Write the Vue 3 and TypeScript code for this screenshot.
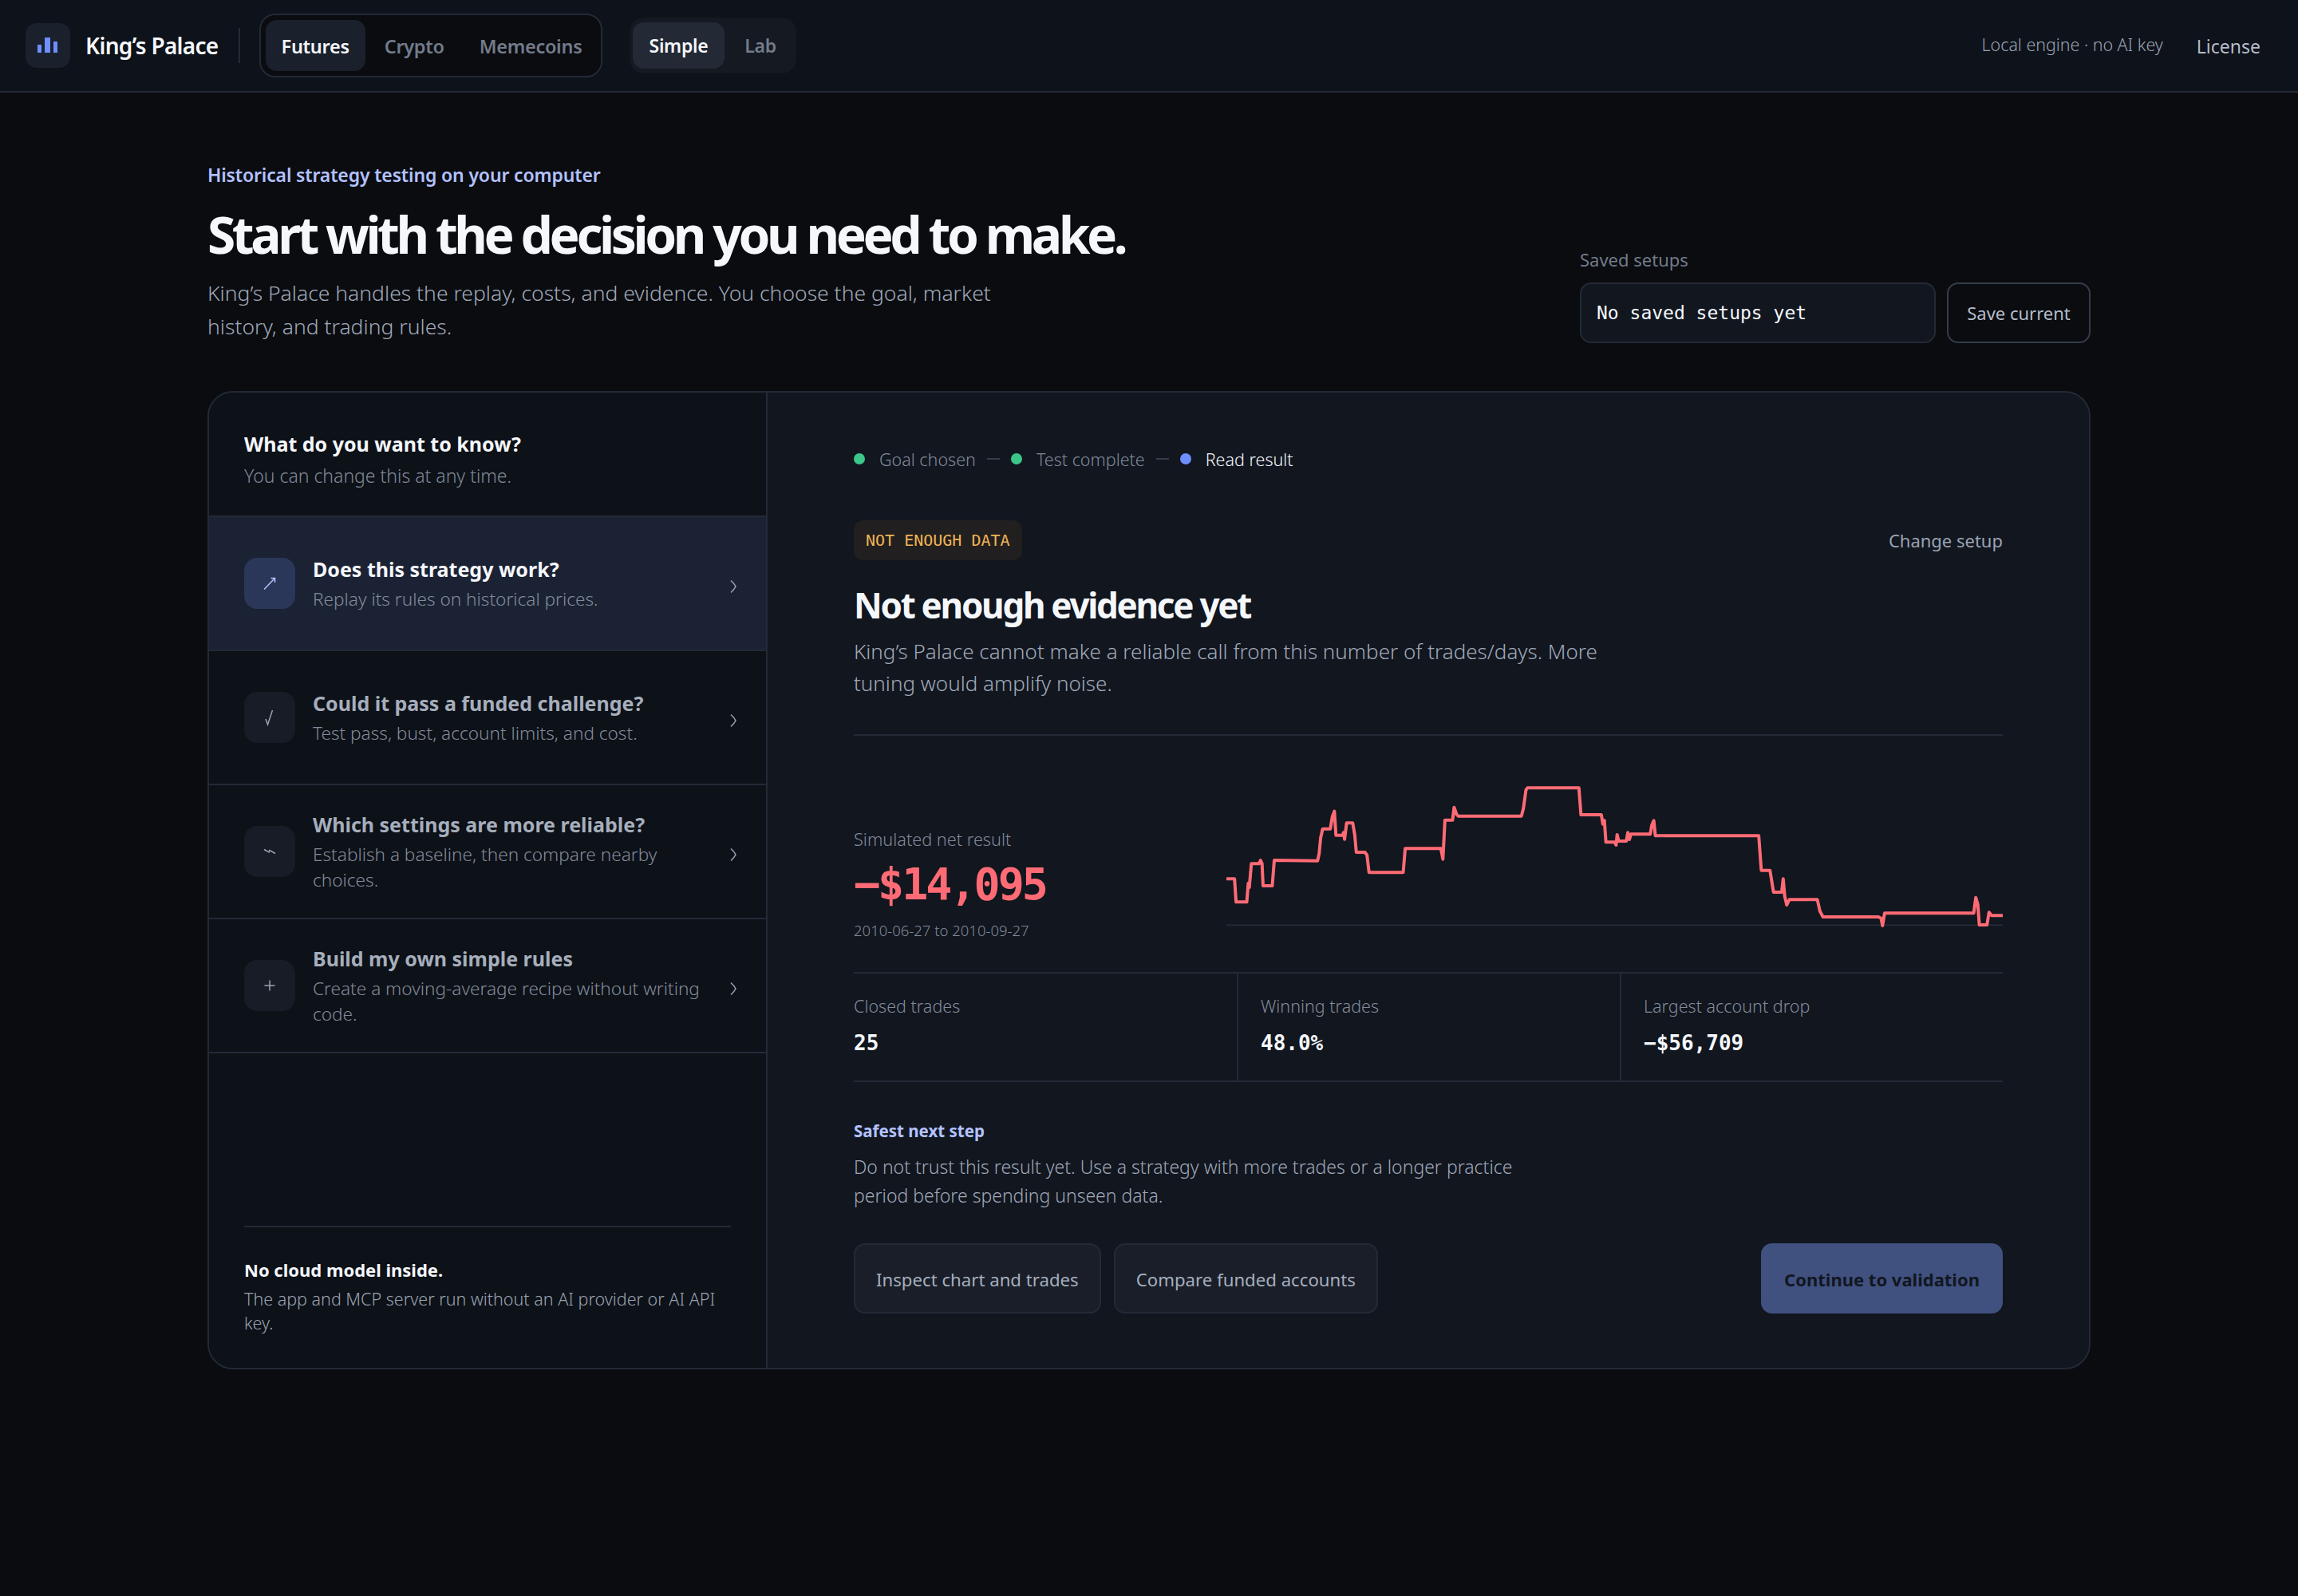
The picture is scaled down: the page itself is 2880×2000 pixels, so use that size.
<template>
  <div class="page">
    <header class="topbar">
      <div class="logo">
        <svg width="26" height="20" viewBox="0 0 26 20">
          <rect x="0" y="9" width="5" height="10" fill="#6f8eff" />
          <rect x="9" y="0" width="7" height="19" fill="#6f8eff" />
          <rect x="20" y="5" width="5" height="14" fill="#6f8eff" />
        </svg>
      </div>
      <span class="brand">King’s Palace</span>
      <span class="top-divider"></span>
      <nav class="market-tabs">
        <button v-for="m in markets" :key="m" class="market-tab" :class="{ active: m === 'Futures' }">{{ m }}</button>
      </nav>
      <nav class="mode-tabs">
        <button class="mode-tab active">Simple</button>
        <button class="mode-tab">Lab</button>
      </nav>
      <span class="engine">Local engine · no AI key</span>
      <span class="license">License</span>
    </header>

    <main class="content">
      <section class="hero">
        <div class="hero-text">
          <div class="eyebrow">Historical strategy testing on your computer</div>
          <h1>Start with the decision you need to make.</h1>
          <p class="lead">King’s Palace handles the replay, costs, and evidence. You choose the goal, market history, and trading rules.</p>
        </div>
        <div class="saved">
          <label class="saved-label">Saved setups</label>
          <div class="saved-row">
            <div class="saved-select">No saved setups yet</div>
            <button class="saved-btn">Save current</button>
          </div>
        </div>
      </section>

      <section class="panel">
        <aside class="goals">
          <div class="goals-head">
            <div class="goals-title">What do you want to know?</div>
            <div class="goals-sub">You can change this at any time.</div>
          </div>
          <button v-for="g in goals" :key="g.title" class="goal" :class="{ active: g.active }">
            <span class="goal-icon">
              <svg width="24" height="24" viewBox="0 0 24 24" fill="none" stroke="currentColor" stroke-width="1.5">
                <path :d="g.icon" />
              </svg>
            </span>
            <span class="goal-text">
              <span class="goal-title">{{ g.title }}</span>
              <span class="goal-desc">{{ g.desc }}</span>
            </span>
            <svg class="goal-chevron" width="10" height="18" viewBox="0 0 10 18" fill="none" stroke="currentColor" stroke-width="1.6">
              <path d="M2 1.5 Q6 5 8 9 Q6 13 2 16.5" />
            </svg>
          </button>
          <div class="goals-foot">
            <div class="foot-title">No cloud model inside.</div>
            <div class="foot-text">The app and MCP server run without an AI provider or AI API key.</div>
          </div>
        </aside>

        <div class="result">
          <div class="steps">
            <span class="dot green"></span><span class="step">Goal chosen</span><span class="dash"></span>
            <span class="dot green"></span><span class="step">Test complete</span><span class="dash"></span>
            <span class="dot blue"></span><span class="step current">Read result</span>
          </div>

          <div class="status-row">
            <span class="badge">NOT ENOUGH DATA</span>
            <span class="change">Change setup</span>
          </div>

          <h2>Not enough evidence yet</h2>
          <p class="verdict">King’s Palace cannot make a reliable call from this number of trades/days. More tuning would amplify noise.</p>

          <div class="chart-row">
            <div class="net">
              <div class="net-label">Simulated net result</div>
              <div class="net-value">−$14,095</div>
              <div class="net-dates">2010-06-27 to 2010-09-27</div>
            </div>
            <svg class="chart" viewBox="28 0 1524 660" preserveAspectRatio="none">
              <line x1="28" y1="598" x2="1552" y2="598" class="chart-base" />
              <polyline :points="curve" class="chart-line" />
            </svg>
          </div>

          <div class="stats">
            <div v-for="s in stats" :key="s.label" class="stat">
              <div class="stat-label">{{ s.label }}</div>
              <div class="stat-value">{{ s.value }}</div>
            </div>
          </div>

          <div class="next-label">Safest next step</div>
          <p class="next-text">Do not trust this result yet. Use a strategy with more trades or a longer practice period before spending unseen data.</p>

          <div class="actions">
            <button class="action">Inspect chart and trades</button>
            <button class="action">Compare funded accounts</button>
            <button class="primary">Continue to validation</button>
          </div>
        </div>
      </section>
    </main>
  </div>
</template>

<script setup lang="ts">
const markets = ['Futures', 'Crypto', 'Memecoins']

// icon strokes, drawn on a 24 box
const goals = [
  { icon: 'M5 19.5 L18.5 5.5 M13.5 5.5 H18.5 V11', title: 'Does this strategy work?', desc: 'Replay its rules on historical prices.', active: true },
  { icon: 'M7 14 L9.5 21 L15.5 3', title: 'Could it pass a funded challenge?', desc: 'Test pass, bust, account limits, and cost.', active: false },
  { icon: 'M5 9.5 L11 13 L12 10.5 L19 14.5', title: 'Which settings are more reliable?', desc: 'Establish a baseline, then compare nearby choices.', active: false },
  { icon: 'M12 5.5 V18.5 M5.5 12 H18.5', title: 'Build my own simple rules', desc: 'Create a moving-average recipe without writing code.', active: false },
]

const stats = [
  { label: 'Closed trades', value: '25' },
  { label: 'Winning trades', value: '48.0%' },
  { label: 'Largest account drop', value: '−$56,709' },
]

const curve =
  '28,424 44,424 47,511 68,511 71,440 73,456 77,367 92,367 95,354 98,367 100,450 118,450 122,354 207,356 210,330 213,270 217,236 232,236 236,190 240,170 243,260 256,260 258,250 260,275 264,214 276,214 280,260 283,324 300,324 304,335 308,400 375,400 379,310 449,310 453,350 457,203 472,203 475,155 480,182 483,188 607,188 611,160 616,90 619,82 720,82 724,183 764,183 767,218 770,204 773,286 790,286 793,297 795,258 798,282 813,282 816,250 819,276 822,256 860,256 863,222 867,205 870,262 1073,262 1078,392 1095,392 1102,474 1118,474 1121,424 1124,490 1128,522 1133,502 1188,502 1193,545 1199,567 1308,567 1313,572 1316,600 1320,553 1495,553 1499,494 1503,520 1506,597 1521,597 1525,550 1530,562 1552,562'
</script>

<style>
body {
  background: #0a0c10;
}
</style>

<style scoped>
.page {
  min-height: 2000px;
  background: #0a0c10;
  color: #f5f7fb;
  font-family: "Noto Sans", sans-serif;
}
button {
  font-family: inherit;
  border: none;
  background: none;
  padding: 0;
}
.topbar {
  height: 116px;
  box-sizing: border-box;
  border-bottom: 2px solid #232a36;
  background: #0e121a;
  display: flex;
  align-items: center;
  padding: 0 47px 0 32px;
}
.logo {
  width: 56px;
  height: 56px;
  border-radius: 14px;
  background: #1a202c;
  display: flex;
  align-items: center;
  justify-content: center;
}
.brand {
  margin-left: 19px;
  font-size: 28px;
  font-weight: 600;
  letter-spacing: -0.7px;
}
.top-divider {
  width: 2px;
  height: 44px;
  background: #232a36;
  margin: 0 24px 0 25px;
}
.market-tabs {
  display: flex;
  align-items: center;
  gap: 4px;
  height: 80px;
  padding: 0 6px;
  border: 2px solid #232a36;
  border-radius: 20px;
  background: #0a0c10;
  width: 430px;
  box-sizing: border-box;
}
.market-tab {
  height: 64px;
  padding: 2px 20px 0;
  border-radius: 14px;
  font-size: 23.5px;
  font-weight: 600;
  letter-spacing: -0.3px;
  color: #737b8a;
}
.market-tab.active {
  background: #1a202c;
  color: #f5f7fb;
}
.mode-tabs {
  display: flex;
  align-items: center;
  gap: 4px;
  height: 70px;
  margin-left: 34px;
  padding: 0 4px;
  border-radius: 18px;
  background: #141922;
}
.mode-tab {
  height: 58px;
  padding: 0 21px;
  border-radius: 14px;
  font-size: 23px;
  font-weight: 600;
  letter-spacing: -0.3px;
  color: #737b8a;
}
.mode-tab.active {
  background: #232935;
  color: #f5f7fb;
}
.engine {
  margin-left: auto;
  font-size: 21.4px;
  font-weight: 300;
  color: #9aa3b2;
  margin-top: -4px;
}
.license {
  margin-left: 42px;
  margin-top: 2px;
  font-size: 23px;
  color: #b5bcc9;
}
.content {
  width: 2360px;
  margin: 0 auto;
}
.hero {
  display: flex;
  justify-content: space-between;
  align-items: flex-end;
  padding-top: 88px;
  height: 374px;
  box-sizing: border-box;
  padding-bottom: 60px;
}
.eyebrow {
  font-size: 23px;
  font-weight: 600;
  letter-spacing: -0.15px;
  color: #b3c2ff;
  line-height: 32px;
}
h1 {
  margin: 21px 0 0;
  font-size: 64px;
  line-height: 76px;
  font-weight: 700;
  letter-spacing: -4.4px;
  color: #f5f7fb;
}
.lead {
  margin: 14px 0 0;
  width: 1020px;
  font-size: 26.5px;
  font-weight: 300;
  line-height: 42px;
  color: #a0a8b8;
}
.saved {
  width: 640px;
}
.saved-label {
  display: block;
  font-size: 22px;
  color: #737b8a;
  line-height: 30px;
  margin-bottom: 14px;
}
.saved-row {
  display: flex;
  gap: 14px;
}
.saved-select {
  width: 446px;
  height: 76px;
  box-sizing: border-box;
  border: 2px solid #232a36;
  border-radius: 14px;
  background: #11161f;
  font-family: "DejaVu Sans Mono", monospace;
  font-size: 23px;
  line-height: 72px;
  padding-left: 19px;
  color: #f5f7fb;
}
.saved-btn {
  flex: 1;
  height: 76px;
  border: 2px solid #343c4b;
  border-radius: 14px;
  background: #0a0c10;
  font-size: 22px;
  color: #b5bcc9;
}
.panel {
  display: grid;
  grid-template-columns: 700px 1fr;
  height: 1226px;
  box-sizing: border-box;
  border: 2px solid #232a36;
  border-radius: 32px;
  overflow: hidden;
  background: #11161f;
}
.goals {
  display: flex;
  flex-direction: column;
  background: #0d1118;
  border-right: 2px solid #232a36;
}
.goals-head {
  height: 156px;
  box-sizing: border-box;
  padding: 46px 44px 0;
  border-bottom: 2px solid #232a36;
}
.goals-title {
  font-size: 25px;
  font-weight: 700;
  line-height: 36px;
}
.goals-sub {
  font-size: 23px;
  font-weight: 300;
  line-height: 32px;
  margin-top: 6px;
  color: #828a99;
}
.goal {
  height: 168px;
  flex: none;
  box-sizing: border-box;
  display: flex;
  align-items: center;
  gap: 22px;
  padding: 0 36px 0 44px;
  border-bottom: 2px solid #232a36;
  text-align: left;
}
.goal.active {
  background: #1b2234;
}
.goal-icon {
  flex: none;
  width: 64px;
  height: 64px;
  border-radius: 16px;
  background: #171c26;
  display: flex;
  align-items: center;
  justify-content: center;
  color: #9aa3b2;
}
.goal.active .goal-icon {
  background: #2a3758;
  color: #b3c2ff;
}
.goal-text {
  flex: 1;
  display: block;
}
.goal-title {
  display: block;
  font-size: 25px;
  font-weight: 700;
  line-height: 35px;
  color: #a6aebc;
}
.goal.active .goal-title {
  color: #f5f7fb;
}
.goal-desc {
  display: block;
  font-size: 22.6px;
  font-weight: 300;
  line-height: 32px;
  margin-top: 4px;
  color: #828a99;
}
.goal-chevron {
  flex: none;
  margin-top: 8px;
  color: #9aa3b2;
}
.goals-foot {
  margin: auto 44px 0;
  padding: 37px 0 41px;
  border-top: 2px solid #232a36;
}
.foot-title {
  font-size: 22px;
  font-weight: 700;
  line-height: 32px;
}
.foot-text {
  font-size: 21.5px;
  font-weight: 300;
  line-height: 30px;
  margin-top: 6px;
  color: #9aa3b2;
}
.result {
  padding: 68px 108px 0 108px;
}
.steps {
  display: flex;
  align-items: center;
  height: 30px;
  font-size: 21.5px;
  font-weight: 300;
  color: #828a99;
}
.dot {
  width: 14px;
  height: 14px;
  border-radius: 50%;
  margin-right: 18px;
}
.dot.green {
  background: #3cc68a;
}
.dot.blue {
  background: #6f8eff;
}
.dash {
  width: 16px;
  height: 2px;
  background: #343c4b;
  margin: 0 14px;
}
.step.current {
  color: #f5f7fb;
}
.status-row {
  display: flex;
  justify-content: space-between;
  align-items: center;
  margin-top: 62px;
}
.badge {
  height: 50px;
  line-height: 50px;
  padding: 0 15px;
  border-radius: 12px;
  background: #211f1f;
  color: #f0b454;
  font-family: "DejaVu Sans Mono", monospace;
  font-size: 20px;
}
.change {
  font-size: 22px;
  color: #9aa3b2;
}
h2 {
  margin: 28px 0 0;
  font-size: 44px;
  line-height: 56px;
  font-weight: 700;
  letter-spacing: -2.3px;
  color: #f5f7fb;
}
.verdict {
  margin: 10px 0 0;
  width: 970px;
  font-size: 26px;
  font-weight: 300;
  line-height: 40px;
  color: #a0a8b8;
}
.chart-row {
  display: grid;
  grid-template-columns: 467px 1fr;
  align-items: end;
  margin-top: 44px;
  padding: 38px 0;
  border-top: 2px solid #232a36;
}
.chart {
  display: block;
  width: 100%;
  height: 220px;
}
.chart-line {
  fill: none;
  stroke: #ff6b75;
  stroke-width: 4;
  stroke-linejoin: round;
  vector-effect: non-scaling-stroke;
}
.chart-base {
  stroke: #232a36;
  stroke-width: 2;
  vector-effect: non-scaling-stroke;
}
.net-label {
  font-size: 21.7px;
  font-weight: 300;
  line-height: 30px;
  color: #828a99;
}
.net-value {
  margin-top: 7px;
  font-family: "DejaVu Sans Mono", monospace;
  font-size: 55px;
  font-weight: 700;
  line-height: 68px;
  letter-spacing: -3px;
  color: #ff6b75;
}
.net-dates {
  margin-top: 10px;
  font-size: 18.5px;
  font-weight: 300;
  line-height: 28px;
  color: #828a99;
}
.stats {
  display: grid;
  grid-template-columns: 480px 480px 1fr;
  border-top: 2px solid #232a36;
  border-bottom: 2px solid #232a36;
  height: 138px;
  box-sizing: border-box;
}
.stat {
  padding: 26px 0 0 28px;
  border-left: 2px solid #232a36;
}
.stat:first-child {
  padding-left: 0;
  border-left: none;
}
.stat-label {
  font-size: 21.5px;
  font-weight: 300;
  line-height: 30px;
  color: #828a99;
}
.stat-value {
  margin-top: 13px;
  font-family: "DejaVu Sans Mono", monospace;
  font-size: 26px;
  font-weight: 700;
  line-height: 36px;
  color: #f5f7fb;
}
.next-label {
  margin-top: 46px;
  font-size: 20.5px;
  font-weight: 700;
  line-height: 30px;
  color: #b3c2ff;
}
.next-text {
  margin: 12px 0 0;
  width: 880px;
  font-size: 23px;
  line-height: 36px;
  font-weight: 300;
  color: #a0a8b8;
}
.actions {
  display: flex;
  gap: 16px;
  margin-top: 42px;
}
.action {
  height: 88px;
  padding: 2px 26px 0;
  border: 2px solid #232a36;
  border-radius: 14px;
  background: #191e29;
  font-size: 22.2px;
  color: #a6aebc;
}
.primary {
  height: 88px;
  margin-left: auto;
  padding: 2px 29px 0;
  border-radius: 14px;
  background: #40507f;
  font-size: 22px;
  font-weight: 700;
  color: #111720;
}
</style>
